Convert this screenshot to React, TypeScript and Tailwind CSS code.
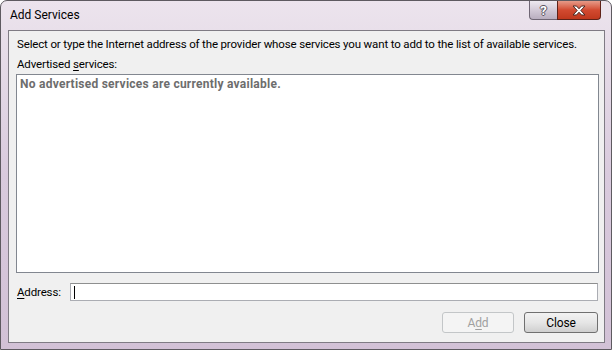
import React from 'react';

const font = { fontFamily: 'Roboto, "Noto Sans", sans-serif' };

function HelpButton() {
  return (
    <div className="flex h-[19px] w-[28px] items-center justify-center rounded-bl-[4px] border border-t-0 border-r-0 border-[#6f6674] bg-gradient-to-b from-[#eeeaf0] via-[#d3cad7] to-[#b9aebf]">
      <span className="text-[13px] font-bold leading-none text-white [text-shadow:1px_0_0_#5a5360,-1px_0_0_#5a5360,0_1px_0_#5a5360,0_-1px_0_#5a5360]">
        ?
      </span>
    </div>
  );
}

function CloseButton() {
  return (
    <div className="flex h-[19px] w-[44px] items-center justify-center rounded-br-[4px] border border-t-0 border-[#5e2218] bg-gradient-to-b from-[#e69a88] via-[#d24a30] to-[#c0381d]">
      <svg width="14" height="11" viewBox="0 0 14 11">
        <path
          d="M1 1h3.5L7 3.8 9.5 1H13L8.8 5.5 13 10H9.5L7 7.2 4.5 10H1l4.2-4.5z"
          fill="#fff"
          stroke="#4b2a24"
          strokeWidth="1"
          strokeLinejoin="round"
        />
      </svg>
    </div>
  );
}

function Button({ label, disabled }: { label: React.ReactNode; disabled?: boolean }) {
  return (
    <div
      className={`flex h-[21px] items-center justify-center rounded-[3px] border text-[12px] ${
        disabled
          ? 'border-[#c3c6c8] bg-[#f4f4f4] text-[#a0a0a0]'
          : 'border-[#707070] bg-gradient-to-b from-[#f2f2f2] via-[#e6e6e6] to-[#cfcfcf] text-black'
      }`}
    >
      {label}
    </div>
  );
}

export default function App() {
  return (
    <div className="h-[350px] w-[612px] bg-white" style={font}>
      <div className="flex h-[350px] w-[612px] flex-col rounded-t-[7px] border border-[#5e5a60] bg-gradient-to-b from-[#ece4ed] via-[#d9cadd] to-[#d2c1d6]">
        {/* Title bar */}
        <div className="flex h-[29px] shrink-0 items-start justify-between pl-[9px] pr-[10px]">
          <span className="mt-[7px] text-[12px] leading-[15px] text-black">Add Services</span>
          <div className="flex">
            <HelpButton />
            <CloseButton />
          </div>
        </div>

        {/* Content */}
        <div className="mb-[6px] ml-[7px] mr-[6px] flex flex-1 flex-col border border-[#7f7b84] bg-[#f0f0f0] pl-[7px] pr-[5px] pt-[5px] text-[11.5px] leading-[16px] tracking-[-0.15px] text-black">
          <p className="whitespace-nowrap pl-[1px]">
            Select or type the Internet address of the provider whose services you want to add to the list of available services.
          </p>
          <p className="mt-[4px] pl-[1px]">
            Advertised <span className="underline underline-offset-2">s</span>ervices:
          </p>
          <div className="mt-[2px] h-[199px] border border-[#828790] bg-white px-[3px] pt-[1px]">
            <span className="text-[12px] font-bold tracking-[0.25px] text-[#6d6d6d]">
              No advertised services are currently available.
            </span>
          </div>
          <div className="mt-[10px] flex items-center">
            <span className="w-[54px] pl-[1px]">
              <span className="underline underline-offset-2">A</span>ddress:
            </span>
            <div className="mr-[1px] flex h-[18px] flex-1 items-center border border-[#abadb3] border-t-[#8e8f8f] bg-white pl-[3px]">
              <span className="h-[13px] w-[1px] bg-black" />
            </div>
          </div>
          <div className="mt-[11px] flex justify-end gap-[10px] pr-[1px]">
            <div className="w-[72px]">
              <Button
                disabled
                label={
                  <>
                    A<span className="underline underline-offset-2">d</span>d
                  </>
                }
              />
            </div>
            <div className="w-[74px]">
              <Button label="Close" />
            </div>
          </div>
        </div>
      </div>
    </div>
  );
}
